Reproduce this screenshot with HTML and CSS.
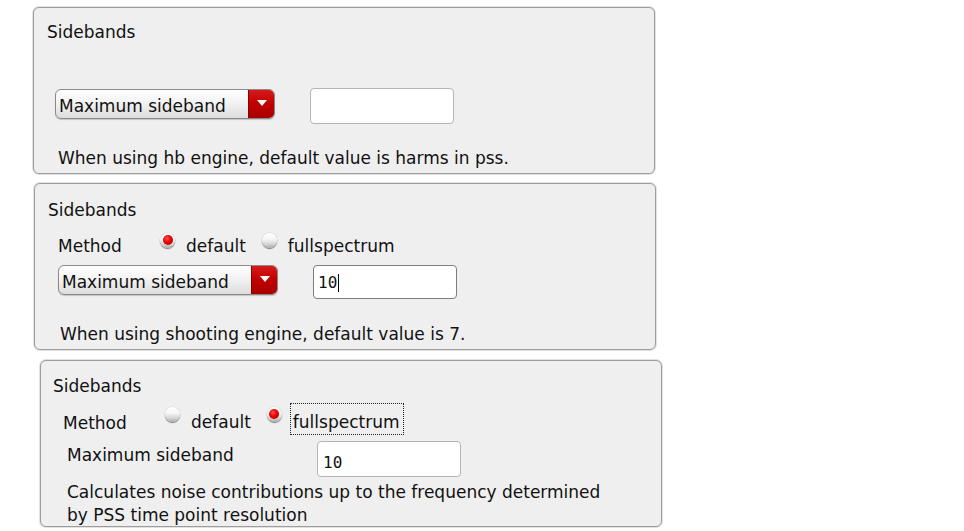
FILE: index.html
```html
<!DOCTYPE html>
<html>
<head>
<meta charset="utf-8">
<title>Sidebands</title>
<link rel="stylesheet" href="styles.css">
</head>
<body>
<div class="page">
  <section class="panel p1">
    <div class="title">Sidebands</div>
    <div class="row combo-row r1">
      <div class="combo"><span class="combo-text">Maximum sideband</span><span class="combo-btn"><svg width="10" height="6" viewBox="0 0 10 6"><path d="M0 0H10L5 6Z" fill="#fff"/></svg></span></div>
      <div class="field f1"></div>
    </div>
    <p class="desc d1">When using hb engine, default value is harms in pss.</p>
  </section>

  <section class="panel p2">
    <div class="title">Sidebands</div>
    <div class="row method-row m2">
      <span class="label method">Method</span>
      <span class="radio on"></span>
      <span class="opt">default</span>
      <span class="radio"></span>
      <span class="opt">fullspectrum</span>
    </div>
    <div class="row combo-row r2">
      <div class="combo"><span class="combo-text">Maximum sideband</span><span class="combo-btn"><svg width="10" height="6" viewBox="0 0 10 6"><path d="M0 0H10L5 6Z" fill="#fff"/></svg></span></div>
      <div class="field f2 focused"><span class="val">10</span><span class="caret"></span></div>
    </div>
    <p class="desc d2">When using shooting engine, default value is 7.</p>
  </section>

  <section class="panel p3">
    <div class="title">Sidebands</div>
    <div class="row method-row m3">
      <span class="label method">Method</span>
      <span class="radio"></span>
      <span class="opt">default</span>
      <span class="radio on"></span>
      <span class="opt focus">fullspectrum</span>
    </div>
    <div class="row side-row">
      <span class="label side-label">Maximum sideband</span>
      <div class="field f3"><span class="val">10</span></div>
    </div>
    <p class="desc d3">Calculates noise contributions up to the frequency determined<br>by PSS time point resolution</p>
  </section>
</div>
</body>
</html>
```

FILE: styles.css
```css
* { box-sizing: border-box; }

html, body {
  margin: 0;
  padding: 0;
  background: #ffffff;
}

body {
  font-family: "DejaVu Sans", "Liberation Sans", sans-serif;
  font-size: 17px;
  color: #111;
}

.page {
  display: flex;
  flex-direction: column;
  align-items: flex-start;
  padding-top: 7px;
  width: 964px;
  height: 531px;
  overflow: hidden;
}

.panel {
  width: 622px;
  height: 167px;
  border: 1px solid #9d9d9d;
  border-radius: 6px;
  background: #efefef;
  box-shadow: 0 0 0 1px #e2e2e2;
  padding-left: 13px;
  flex: none;
}

.p1 { margin-left: 33px; padding-top: 14px; }
.p2 { margin-left: 34px; margin-top: 9px; padding-top: 16px; }
.p3 { margin-left: 40px; margin-top: 10px; padding-top: 15px; padding-left: 12px; }

.title {
  line-height: 20px;
  height: 20px;
}

.row {
  display: flex;
  align-items: flex-start;
}

/* combo row */
.r1 { margin-top: 46px; margin-left: 8px; }
.r1 .combo { margin-top: 1px; }
.r2 { margin-top: 5px; margin-left: 10px; }

.combo {
  width: 220px;
  height: 30px;
  display: flex;
  border: 1px solid #8a8a8a;
  border-radius: 6px;
  background: linear-gradient(#fefefe 0%, #f3f3f3 45%, #dcdcdc 100%);
  box-shadow: 0 1px 1px rgba(0,0,0,0.18);
  overflow: hidden;
  flex: none;
}

.combo-text {
  flex: 1;
  line-height: 28px;
  padding-top: 2px;
  padding-left: 3px;
  white-space: nowrap;
}

.combo-btn {
  width: 26px;
  height: 100%;
  background: linear-gradient(#d61a1a 0%, #c00000 50%, #a80000 100%);
  border-left: 1px solid #8a0000;
  display: flex;
  align-items: center;
  justify-content: center;
  padding-bottom: 2px;
}

.field {
  width: 144px;
  background: #fff;
  border: 1px solid #b4b4b4;
  border-radius: 4px;
  flex: none;
  display: flex;
  align-items: center;
  font-family: "DejaVu Sans Mono", "Liberation Mono", monospace;
  font-size: 16px;
  padding-left: 5px;
}

.f1 { height: 36px; margin-left: 35px; }
.f2 { height: 34px; margin-left: 35px; border-color: #7d7d7d; padding-left: 4px; padding-top: 1px; }
.f3 { height: 36px; margin-left: auto; width: 144px; padding-left: 5px; padding-top: 7px; }

.caret {
  width: 1px;
  height: 18px;
  background: #000;
  margin-left: 1px;
}

.desc {
  margin: 0;
  line-height: 20px;
  white-space: nowrap;
}

.d1 { margin-top: 24px; margin-left: 11px; }
.d2 { margin-top: 25px; margin-left: 12px; }
.d3 { margin-top: 4px; margin-left: 14px; line-height: 23px; }

/* method row */
.method-row { height: 32px; }
.m2 { margin-top: 8px; margin-left: 10px; }
.m3 { margin-top: 7px; margin-left: 10px; }

.label { line-height: 20px; white-space: nowrap; }
.method { width: 102px; margin-top: 8px; flex: none; }
.m3 .method { margin-top: 10px; }
.m3 .radio { margin-top: 4px; }

.radio {
  width: 15px;
  height: 15px;
  border-radius: 50%;
  margin-top: 5px;
  flex: none;
  position: relative;
  background: linear-gradient(#ffffff 0%, #f6f6f6 40%, #d4d4d4 75%, #a9a9a9 100%);
  box-shadow: 0 1px 1px rgba(0,0,0,0.45), 0 0 0 0.5px rgba(0,0,0,0.12);
}

.radio.on::after {
  content: "";
  position: absolute;
  left: 2.5px;
  top: 2px;
  width: 10px;
  height: 10px;
  border-radius: 50%;
  background: radial-gradient(circle at 40% 35%, #ff5050 0%, #e40000 45%, #b00000 100%);
}

.opt {
  line-height: 20px;
  border: 1px dotted transparent;
  padding: 7px 4px 3px 2px;
  margin-left: 8px;
  margin-right: 11px;
  white-space: nowrap;
}

.m3 .opt { padding-top: 8px; padding-bottom: 2px; }

.opt.focus {
  border-color: #222;
}

/* third panel value row */
.side-row {
  margin-top: 6px;
  margin-left: 14px;
  width: 394px;
}

.side-label { margin-top: 4px; }
```
